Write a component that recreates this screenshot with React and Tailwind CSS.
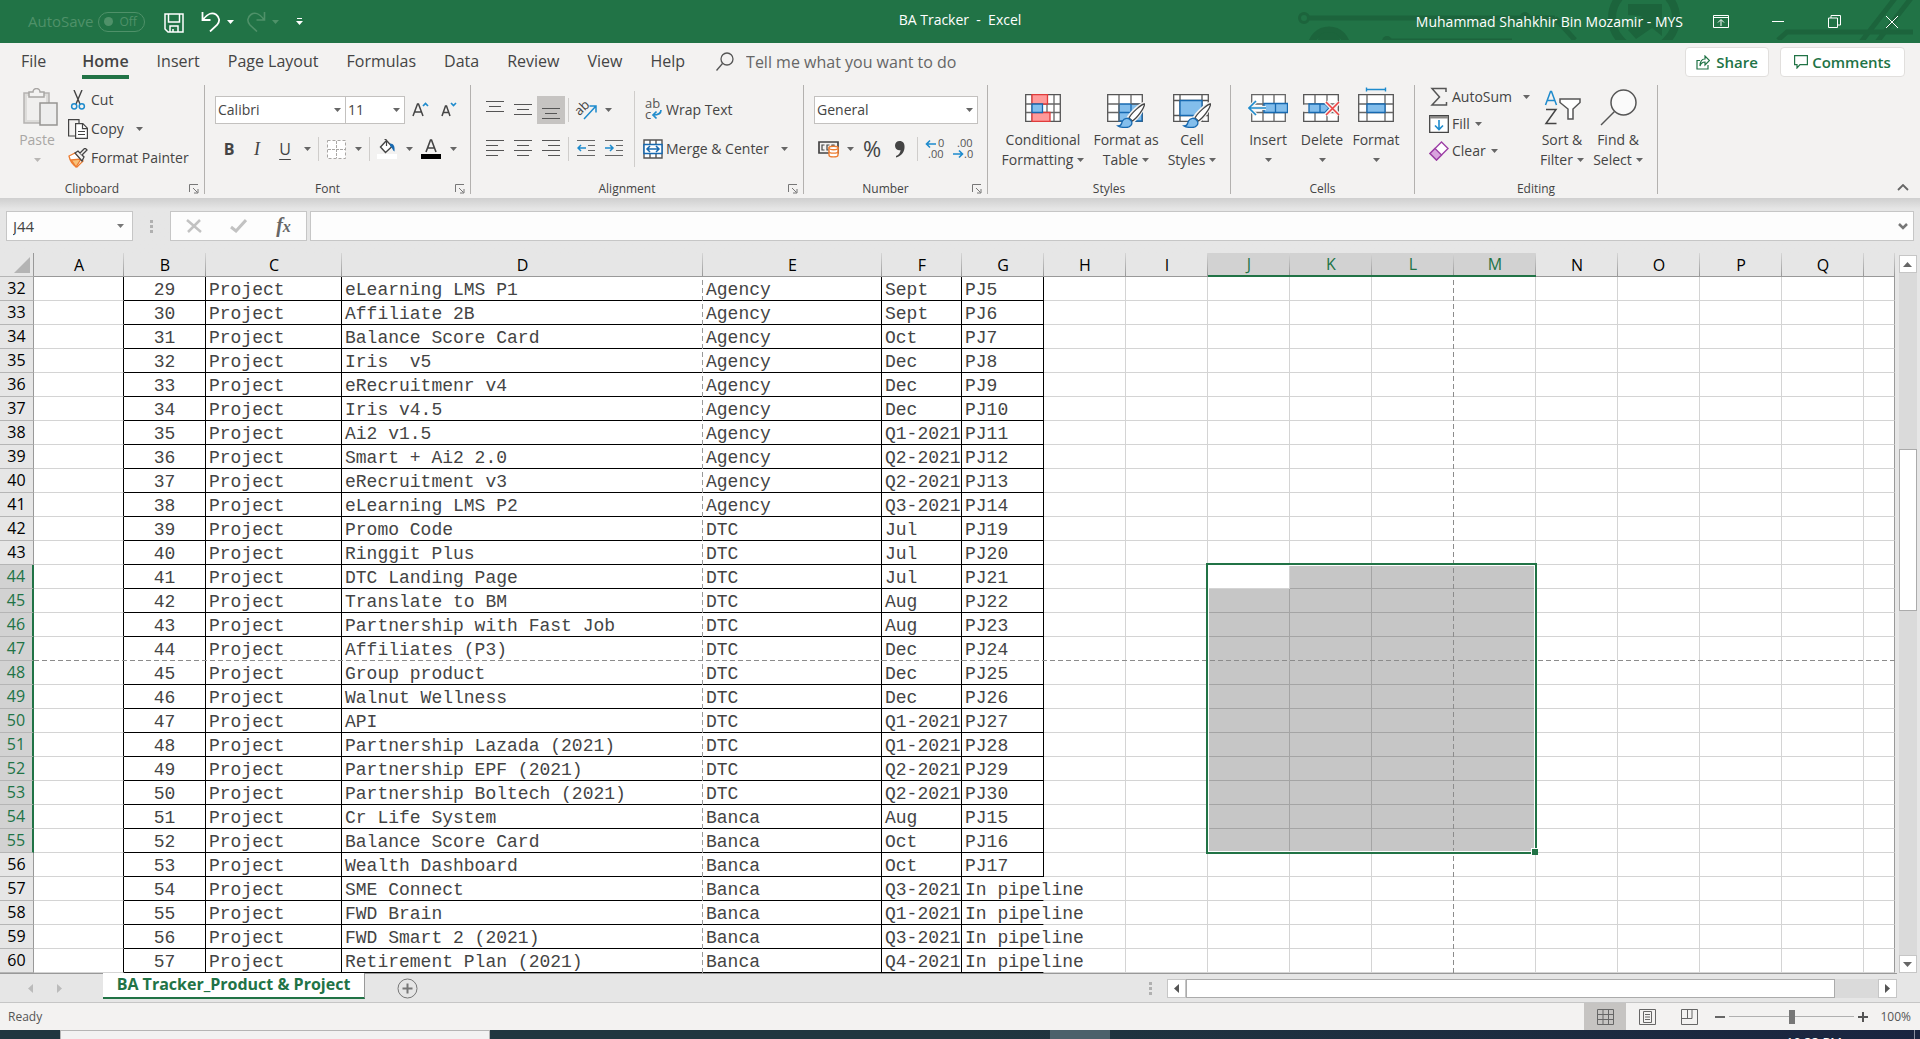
import React from 'react';
import clsx from 'clsx';

const TABS = ['File', 'Home', 'Insert', 'Page Layout', 'Formulas', 'Data', 'Review', 'View', 'Help'];

const COLUMNS = [
    { id: 'A', width: 'w-[90px]' },
    { id: 'B', width: 'w-[82px]' },
    { id: 'C', width: 'w-[136px]' },
    { id: 'D', width: 'w-[361px]' },
    { id: 'E', width: 'w-[179px]' },
    { id: 'F', width: 'w-[80px]' },
    { id: 'G', width: 'w-[82px]' },
    { id: 'H', width: 'w-[82px]' },
    { id: 'I', width: 'w-[82px]' },
    { id: 'J', width: 'w-[82px]' },
    { id: 'K', width: 'w-[82px]' },
    { id: 'L', width: 'w-[82px]' },
    { id: 'M', width: 'w-[82px]' },
    { id: 'N', width: 'w-[82px]' },
    { id: 'O', width: 'w-[82px]' },
    { id: 'P', width: 'w-[82px]' },
    { id: 'Q', width: 'w-[82px]' },
    { id: '', width: '' },
];

const FIRST_ROW = 32;
const DATA_COLUMNS = ['B', 'C', 'D', 'E', 'F', 'G'];
const SELECTED_COLUMNS = ['J', 'K', 'L', 'M'];

// name, channel, due, code
const PROJECTS = [
    ['eLearning LMS P1', 'Agency', 'Sept', 'PJ5'],
    ['Affiliate 2B', 'Agency', 'Sept', 'PJ6'],
    ['Balance Score Card', 'Agency', 'Oct', 'PJ7'],
    ['Iris  v5', 'Agency', 'Dec', 'PJ8'],
    ['eRecruitmenr v4', 'Agency', 'Dec', 'PJ9'],
    ['Iris v4.5', 'Agency', 'Dec', 'PJ10'],
    ['Ai2 v1.5', 'Agency', 'Q1-2021', 'PJ11'],
    ['Smart + Ai2 2.0', 'Agency', 'Q2-2021', 'PJ12'],
    ['eRecruitment v3', 'Agency', 'Q2-2021', 'PJ13'],
    ['eLearning LMS P2', 'Agency', 'Q3-2021', 'PJ14'],
    ['Promo Code', 'DTC', 'Jul', 'PJ19'],
    ['Ringgit Plus', 'DTC', 'Jul', 'PJ20'],
    ['DTC Landing Page', 'DTC', 'Jul', 'PJ21'],
    ['Translate to BM', 'DTC', 'Aug', 'PJ22'],
    ['Partnership with Fast Job', 'DTC', 'Aug', 'PJ23'],
    ['Affiliates (P3)', 'DTC', 'Dec', 'PJ24'],
    ['Group product', 'DTC', 'Dec', 'PJ25'],
    ['Walnut Wellness', 'DTC', 'Dec', 'PJ26'],
    ['API', 'DTC', 'Q1-2021', 'PJ27'],
    ['Partnership Lazada (2021)', 'DTC', 'Q1-2021', 'PJ28'],
    ['Partnership EPF (2021)', 'DTC', 'Q2-2021', 'PJ29'],
    ['Partnership Boltech (2021)', 'DTC', 'Q2-2021', 'PJ30'],
    ['Cr Life System', 'Banca', 'Aug', 'PJ15'],
    ['Balance Score Card', 'Banca', 'Oct', 'PJ16'],
    ['Wealth Dashboard', 'Banca', 'Oct', 'PJ17'],
    ['SME Connect', 'Banca', 'Q3-2021', 'In pipeline'],
    ['FWD Brain', 'Banca', 'Q1-2021', 'In pipeline'],
    ['FWD Smart 2 (2021)', 'Banca', 'Q3-2021', 'In pipeline'],
    ['Retirement Plan (2021)', 'Banca', 'Q4-2021', 'In pipeline'],
];

const ROWS = PROJECTS.map(([name, channel, due, code], i) => ({
    row: FIRST_ROW + i,
    cells: { B: FIRST_ROW + i - 3, C: 'Project', D: name, E: channel, F: due, G: code },
}));

/* ---------- small pieces ---------- */

const Caret = ({ className = 'text-[#666]' }) => (
    <svg width="7" height="4" viewBox="0 0 7 4" className={clsx('shrink-0', className)} aria-hidden="true">
        <path d="M0 0h7L3.5 4z" fill="currentColor" />
    </svg>
);

const CaretButton = ({ label }) => (
    <button aria-label={label} className="flex h-7 w-4 items-center justify-center">
        <Caret />
    </button>
);

const IconButton = ({ label, active, children }) => (
    <button aria-label={label} className={clsx('flex h-7 w-7 items-center justify-center', active && 'bg-[#c6c4c2]')}>
        {children}
    </button>
);

const Divider = () => <div className="mx-[3px] h-6 w-px bg-[#cfcdcb]" />;

const Launcher = ({ label }) => (
    <button aria-label={label} className="absolute right-[5px] top-[6px]">
        <svg width="10" height="10" viewBox="0 0 10 10" fill="none" stroke="#777">
            <path d="M.5 8V.5H9M4 4l4.5 4.5M9 5v4H5" />
        </svg>
    </button>
);

const Group = ({ label, width, launcher, children }) => (
    <>
        <section aria-label={label} className={clsx('shrink-0', width)}>
            <div className="h-[93px]">{children}</div>
            <div className={clsx('relative h-5 text-center text-xs leading-[22px] text-[#444]', launcher && 'pr-5')}>
                {label}
                {launcher && <Launcher label={`${label} settings`} />}
            </div>
        </section>
        <div className="h-[109px] w-px shrink-0 bg-[#b3b1af]" />
    </>
);

const Combo = ({ label, value, width }) => (
    <div className={clsx('relative h-7', width)}>
        <select aria-label={label} className="h-full w-full appearance-none border border-[#c3c1bf] bg-white pl-[2px] text-sm text-[#444]">
            <option>{value}</option>
        </select>
        <Caret className="pointer-events-none absolute right-[5px] top-3 text-[#666]" />
    </div>
);

const BigButton = ({ width, icon, lines, disabled, caretBelow }) => (
    <button
        disabled={disabled}
        className={clsx('flex flex-col items-center text-sm leading-5', width, disabled ? 'text-[#a9a7a5]' : 'text-[#444]')}
    >
        <span className="flex h-[45px] items-end justify-center pb-1">{icon}</span>
        <span className="whitespace-nowrap">{lines[0]}</span>
        <span className="flex h-5 items-center gap-1 whitespace-nowrap">
            {!caretBelow && lines[1]}
            <Caret className={disabled ? 'text-[#b9b7b5]' : 'text-[#666]'} />
        </span>
    </button>
);

/* ---------- icons ---------- */

const Lines = ({ rows }) => (
    <svg width="18" height="18" viewBox="0 0 18 18" stroke="#555" aria-hidden="true">
        {rows.map(([x1, x2, y]) => (
            <path key={y} d={`M${x1} ${y}.5H${x2}`} />
        ))}
    </svg>
);

const IndentIcon = ({ d }) => (
    <svg width="18" height="18" viewBox="0 0 18 18" fill="none" aria-hidden="true">
        <path d="M0 .5h18M11 5.5h7M11 10.5h7M0 15.5h18" stroke="#666" />
        <path d={d} stroke="#1e8bcd" strokeWidth="1.5" />
    </svg>
);

const PasteIcon = () => (
    <svg width="41" height="38" viewBox="-6 0 41 38" fill="none" stroke="#a8a6a4" strokeWidth="1.5">
        <path d="M1 5h25v30H1z" fill="#dddcda" stroke="#b5b3b1" />
        <path d="M4 8h19v24H4z" fill="#f0efee" stroke="none" />
        <path d="M6 4h4a3.5 3.5 0 0 1 7 0h4v5H6z" fill="#f3f2f1" />
        <path d="M17 15h17v22H17z" fill="#ededed" stroke="#979593" />
    </svg>
);

const CutIcon = () => (
    <svg width="20" height="20" viewBox="0 0 20 20" fill="none">
        <path d="M6 0l6 14M14 0L8 14" stroke="#444" strokeWidth="1.4" />
        <circle cx="6.2" cy="16.3" r="2.6" stroke="#1e8bcd" strokeWidth="1.5" />
        <circle cx="13.8" cy="16.3" r="2.6" stroke="#1e8bcd" strokeWidth="1.5" />
    </svg>
);

const CopyIcon = () => (
    <svg width="20" height="20" viewBox="0 0 20 20" fill="none" stroke="#444" strokeWidth="1.2">
        <path d="M7 17H.6V.6H11V4" />
        <path d="M7.6 4.6h7.2l4.6 4.6v10.2H7.6z" fill="#fff" />
        <path d="M14.5 4.6v5h5M10 12.5h7M10 15.5h7" />
    </svg>
);

const PainterIcon = () => (
    <svg width="20" height="20" viewBox="0 0 20 20" fill="none" strokeWidth="1.3">
        <path d="M1 8l6-3 8 8-6 6C5 17 2 13 1 8z" fill="#fff" stroke="#ed7d31" />
        <path d="M3 12l10-1-5 8z" fill="#f8c27a" stroke="#ed7d31" />
        <path d="M7 5l3-2 6 6-2 4z" fill="#f3f2f1" stroke="#444" />
        <path d="M12 5l5-5 2 2-5 5" fill="#f3f2f1" stroke="#444" />
    </svg>
);

const BordersIcon = () => (
    <svg width="19" height="19" viewBox="0 0 19 19" fill="none" stroke="#a8a6a4">
        <path d="M.5.5h18v18H.5z" strokeDasharray="3 2" fill="#fff" />
        <path d="M9.5 1v17M1 9.5h17" strokeDasharray="3 1" />
    </svg>
);

const FillColorIcon = () => (
    <svg width="20" height="20" viewBox="0 0 20 20" fill="none">
        <path d="M3.5 8l6-6.5 5.5 6-6.5 6z" fill="#fff" stroke="#444" strokeWidth="1.4" />
        <path d="M9.5 7V2q0-2-2-1.5" stroke="#444" strokeWidth="1.2" />
        <path d="M13 4.5c4 0 5 3 4.5 8-2-1-2-4-4.5-5.5z" fill="#1769b0" />
        <path d="M0 15h20v5H0z" fill="#fff" />
    </svg>
);

const FontColorIcon = () => (
    <svg width="20" height="20" viewBox="0 0 20 20" fill="none">
        <path d="M5 13L9.5 1h1L15 13M6.5 9h7" stroke="#444" strokeWidth="1.6" />
        <path d="M0 15h20v5H0z" fill="#000" />
    </svg>
);

const FontSizeIcon = ({ up }) => (
    <svg width="18" height="16" viewBox="0 0 18 16" fill="none">
        <path d={up ? 'M1 14L5.5 2h1L11 14M2.5 10h7' : 'M2 14L5.5 4h1L10 14M3 10.5h6'} stroke="#444" strokeWidth="1.5" />
        <path d={up ? 'M11 4l2.5-2.5L16 4' : 'M11 1l2.5 2.5L16 1'} stroke="#1e8bcd" strokeWidth="1.7" />
    </svg>
);

const OrientationIcon = () => (
    <svg width="21" height="20" viewBox="0 0 21 20" fill="none" className="overflow-visible">
        <text x="1" y="14" transform="rotate(-45 5 12)" fontSize="13" fill="#444" className="font-['Open_Sans']">ab</text>
        <path d="M8 19L19.5 6.5M13.5 6h6.5v6.5" stroke="#1e8bcd" strokeWidth="1.5" />
    </svg>
);

const WrapIcon = () => (
    <svg width="20" height="20" viewBox="0 0 20 20" fill="none" className="overflow-visible">
        <text x="2" y="8" fontSize="13" fill="#555" className="font-['Open_Sans']">ab</text>
        <text x="2" y="19" fontSize="13" fill="#555" className="font-['Open_Sans']">c</text>
        <path d="M18 10c0 4-3 5-8 5M13.5 11.5L10 15l3.5 3.5" stroke="#1e8bcd" strokeWidth="1.7" />
    </svg>
);

const MergeIcon = () => (
    <svg width="20" height="20" viewBox="0 0 20 20" fill="none">
        <path d="M1 1h18v18H1zM7 1v5M13 1v5M7 14v5M13 14v5" stroke="#555" strokeWidth="1.4" fill="#fff" />
        <path d="M1 5.5h18v9H1z" fill="#fff" stroke="#1769b0" strokeWidth="1.5" />
        <path d="M4 10h12M7 7l-3 3 3 3M13 7l3 3-3 3" stroke="#1769b0" strokeWidth="1.5" />
    </svg>
);

const CurrencyIcon = () => (
    <svg width="21" height="18" viewBox="0 0 21 18" fill="none">
        <path d="M1 2h19v11H1z" stroke="#444" strokeWidth="1.7" />
        <path d="M6.5 5H4v5h2.5M11.5 5H9v5h2.5M16 8V5h-2v3" stroke="#444" strokeWidth="1.2" />
        <path d="M11 8v7c0 2.5 9 2.5 9 0V8z" fill="#fff" stroke="#ed7d31" strokeWidth="1.4" />
        <ellipse cx="15.5" cy="8" rx="4.5" ry="1.7" fill="#fff" stroke="#ed7d31" strokeWidth="1.4" />
        <path d="M11 11.5c0 2.2 9 2.2 9 0" stroke="#ed7d31" strokeWidth="1.4" />
    </svg>
);

const DecimalIcon = ({ more }) => (
    <svg width="20" height="20" viewBox="0 0 20 20" fill="none" className="overflow-visible">
        <text x={more ? 13 : 4} y="8" fontSize="11" fill="#555" className="font-['Open_Sans']">{more ? '0' : '.00'}</text>
        <text x={more ? 3 : 11} y="19" fontSize="11" fill="#555" className="font-['Open_Sans']">{more ? '.00' : '.0'}</text>
        <path d={more ? 'M11 5H1.5M5 1.5L1.5 5 5 8.5' : 'M0 15h9.5M6 11.5L9.5 15 6 18.5'} stroke="#1e8bcd" strokeWidth="1.6" />
    </svg>
);

const TableGrid = ({ children, width = 36, top = 0 }) => (
    <svg width={width} height={29 + top} viewBox={`0 ${-top} ${width} ${29 + top}`} fill="none" strokeWidth="1.3" className="mb-[3px]">
        <path d="M.7.7h34.6v26.6H.7z" fill="#fff" stroke="#555" />
        {children}
    </svg>
);

const ConditionalIcon = () => (
    <TableGrid>
        <path d="M7 1v26M22 1v26M29 1v26M1 10h34M1 18.5h34" stroke="#666" />
        <path d="M7 .7h15.5V10H7zM7 18.5h18v8.8H7z" fill="#ff9a9a" stroke="#e03c3c" />
        <path d="M7 10h10.5v8.5H7z" fill="#83beec" stroke="#1769b0" />
    </TableGrid>
);

const Brush = () => (
    <>
        <path d="M37 10c-3 0-13 9-15.5 14l4 3.5C30 24 37 14 37 10z" fill="#fff" stroke="#f3f2f1" strokeWidth="4" />
        <path d="M37.5 10c-3 0-13 9-15.5 14l3.5 3C30 24 37.5 14 37.5 10z" fill="#fff" stroke="#444" />
        <path d="M11 32c4 0 3-2 4.5-5s6-4 8.5-.5-1 7-5 7c-3 0-6 0-8-1.5z" fill="#83beec" stroke="#1769b0" />
    </>
);

const FormatTableIcon = () => (
    <svg width="38" height="34" viewBox="0 0 38 34" fill="none" strokeWidth="1.3" className="-mb-[2px]">
        <path d="M.7.7h34.6v26.6H.7z" fill="#fff" stroke="#555" />
        <path d="M12 10h23v17H12z" fill="#83beec" stroke="#1769b0" />
        <path d="M12 1v26M24 1v9M1 10h11M24 10h11M1 18.5h11" stroke="#666" />
        <path d="M24 10v17M12 18.5h23" stroke="#1769b0" />
        <Brush />
    </svg>
);

const CellStylesIcon = () => (
    <svg width="38" height="34" viewBox="0 0 38 34" fill="none" strokeWidth="1.3" className="-mb-[2px]">
        <path d="M.7.7h34.6v26.6H.7zM7 1v26M29 1v26M1 6.5h34M1 21.5h34" fill="#fff" stroke="#555" />
        <path d="M7 6.5h22v15H7z" fill="#83beec" stroke="#1769b0" />
        <Brush />
    </svg>
);

const InsertIcon = () => (
    <svg width="40" height="29" viewBox="-3 0 40 29" fill="none" strokeWidth="1.3" className="mb-[3px]">
        <path d="M.7.7h33.6v26.6H.7zM12 1v26M23 1v26M1 10h33M1 18.5h33" fill="#fff" stroke="#666" />
        <path d="M13 9.5h23.5v9H13z" fill="#83beec" stroke="#1769b0" />
        <path d="M24.5 9.5v9" stroke="#1769b0" />
        <path d="M15 14H-1M5 7l-7 7 7 7" stroke="#f3f2f1" strokeWidth="4" />
        <path d="M15 14H-1M5 7l-7 7 7 7" stroke="#1e8bcd" strokeWidth="1.6" />
    </svg>
);

const DeleteIcon = () => (
    <TableGrid width={38}>
        <path d="M12 1v9M24 1v9M12 18v9M24 18v9M1 10h34M1 18.5h34" stroke="#666" />
        <path d="M0 10.7h6v7H0z" fill="#f3f2f1" />
        <path d="M6 10h16l4 4-4 4.5H6zM17 10v8" fill="#83beec" stroke="#1769b0" />
        <path d="M23 8l13 13M36 8L23 21" stroke="#f3f2f1" strokeWidth="4.5" />
        <path d="M23 8l13 13M36 8L23 21" stroke="#ee4444" strokeWidth="1.6" />
    </TableGrid>
);

const FormatIcon = () => (
    <TableGrid top={7}>
        <path d="M9 1v26M27 1v26M1 10h34M1 18.5h34" stroke="#666" />
        <path d="M9 10h18v8.5H9z" fill="#83beec" stroke="#1769b0" />
        <path d="M8.5-6.5v4M27.5-6.5v4M8.5-4.5h19" stroke="#1e8bcd" strokeWidth="1.4" />
    </TableGrid>
);

const SumIcon = () => (
    <svg width="20" height="20" viewBox="0 0 20 20" fill="none" stroke="#555" strokeWidth="1.5">
        <path d="M17 5V1.5H3L10.5 10 3 18h14.5v-3" />
    </svg>
);

const FillIcon = () => (
    <svg width="20" height="18" viewBox="0 0 20 18" fill="none">
        <path d="M.7.7h18.6v16.6H.7z" fill="#fff" stroke="#444" strokeWidth="1.3" />
        <path d="M1 1h18v2.5H1z" fill="#8a8886" />
        <path d="M10 5v9M6 10.5l4 4 4-4" stroke="#1e8bcd" strokeWidth="1.6" />
    </svg>
);

const ClearIcon = () => (
    <svg width="20" height="20" viewBox="0 0 20 20" fill="none" stroke="#9c3fa5" strokeWidth="1.4">
        <path d="M12.5 1L19 7.5 7.5 19 1 12.5z" fill="#fff" />
        <path d="M6 7.500L12.5 14l-5 5L1 12.5z" fill="#d9a3de" />
    </svg>
);

const SortIcon = () => (
    <svg width="37" height="36" viewBox="0 0 37 36" fill="none" strokeWidth="1.5">
        <path d="M1.5 15L6.5 1.5h1L12.5 15M3 10.5h8" stroke="#1e8bcd" />
        <path d="M2 19.5h10L2 33.500h10.5" stroke="#444" />
        <path d="M16 9h20v3.5L29 19v10h-5V19l-8-6.5z" stroke="#555" fill="#fff" />
    </svg>
);

const FindIcon = () => (
    <svg width="37" height="37" viewBox="0 0 37 37" fill="none" stroke="#555" strokeWidth="1.5">
        <circle cx="23.5" cy="13.5" r="12.5" fill="#fafafa" />
        <path d="M14.5 22.5L1 36" />
    </svg>
);

/* ---------- title bar ---------- */

const TitleBar = () => (
    <header className="relative grid h-[43px] shrink-0 grid-cols-[1fr_auto_1fr] items-center bg-[#217346] text-white">
        <svg width="630" height="40" viewBox="0 0 630 40" className="absolute right-0 top-0" fill="none" stroke="#1c643c" aria-hidden="true">
            <circle cx="14" cy="18" r="4.5" strokeWidth="3" />
            <path d="M19 18h246M265 18l20 22" strokeWidth="5" />
            <circle cx="39" cy="48" r="18" strokeWidth="7" />
            <path d="M28 40a11 8 0 0 1 22 0z" fill="#1c643c" stroke="none" />
            <circle cx="97" cy="41" r="5" fill="#1c643c" stroke="none" />
            <circle cx="235" cy="17" r="5" fill="#1c643c" stroke="none" />
            <path d="M97 39.5h125" strokeWidth="2" />
            <circle cx="354" cy="18" r="32" strokeWidth="8" />
            <path d="M338 4h34v32l-10-8-16 11-8-9 14-14-14-1z" fill="#1c643c" stroke="none" />
            <path d="M488 40l9-8h126M571 42L606-3M587 42L622-3" strokeWidth="5" />
        </svg>
        <div className="relative flex items-center pl-7">
            <span className="text-[15px] text-[#4f9169]">AutoSave</span>
            <button aria-label="AutoSave off" className="ml-1 flex h-5 w-[47px] items-center gap-[7px] rounded-full border border-[#4f9169] pl-[5px] text-xs text-[#4f9169]">
                <span className="h-[9px] w-[9px] rounded-full bg-[#4f9169]" />
                Off
            </button>
            <button aria-label="Save" className="ml-[19px] mt-[2px]">
                <svg width="20" height="20" viewBox="0 0 20 20" fill="none" stroke="#fff" strokeWidth="1.5">
                    <path d="M1 1h18v18H4l-3-3zM4.5 1v8h11V1M6 19v-6h8v6M9 16v3" />
                </svg>
            </button>
            <button aria-label="Undo" className="ml-[17px] flex items-center gap-[6px]">
                <svg width="20" height="21" viewBox="0 0 20 21" fill="none" stroke="#fff" strokeWidth="1.8">
                    <path d="M1.5 1v8h8M2 8.5C6 3 11 1 15 3.500c4 3 4 7 1 10.500l-7 6.500" />
                </svg>
                <Caret className="text-white" />
            </button>
            <button aria-label="Redo" disabled className="ml-3 flex items-center gap-[6px]">
                <svg width="20" height="21" viewBox="0 0 20 21" fill="none" stroke="#4f9169" strokeWidth="1.6">
                    <path d="M18.5 1v8h-8M18 8.5C14 3 9 1 5 3.500c-4 3-4 7-1 10.500l7 6.500" />
                </svg>
                <Caret className="text-[#4f9169]" />
            </button>
            <button aria-label="Customize toolbar" className="ml-[17px]">
                <svg width="7" height="8" viewBox="0 0 7 8">
                    <path d="M1 0h5v1H1zM0 3h7L3.5 7z" fill="#fff" />
                </svg>
            </button>
        </div>
        <h1 className="relative whitespace-pre pb-[3px] text-sm">BA Tracker  -  Excel</h1>
        <div className="relative flex items-center justify-end">
            <span className="mr-[9px] text-sm">Muhammad Shahkhir Bin Mozamir - MYS</span>
            <button aria-label="Ribbon display options" className="flex h-10 w-[57px] items-center justify-center">
                <svg width="16" height="13" viewBox="0 0 16 13" fill="none" stroke="#fff">
                    <path d="M.5.5h15v12H.5zM.5 2.5h15M8 11V5M5 7.5l3-3 3 3" />
                </svg>
            </button>
            <button aria-label="Minimize" className="flex h-10 w-[57px] items-center justify-center">
                <span className="h-px w-3 bg-white" />
            </button>
            <button aria-label="Restore" className="flex h-10 w-[57px] items-center justify-center">
                <svg width="13" height="13" viewBox="0 0 13 13" fill="none" stroke="#fff">
                    <path d="M.5 3h9v9.5h-9zM3 3V.5h9.5V10H10" />
                </svg>
            </button>
            <button aria-label="Close" className="flex h-10 w-[57px] items-center justify-center">
                <svg width="12" height="12" viewBox="0 0 12 12" stroke="#fff">
                    <path d="M0 0l12 12M12 0L0 12" />
                </svg>
            </button>
        </div>
    </header>
);

/* ---------- ribbon ---------- */

const TabRow = () => (
    <nav className="flex h-[42px] items-start pl-[21px] pr-[15px] text-base text-[#444]">
        <div className="flex gap-7">
            {TABS.map((tab) => (
                <button
                    key={tab}
                    className={clsx('h-9 border-b-4 pt-1 leading-7', tab === 'Home' ? 'ml-2 border-[#217346] font-semibold' : 'border-transparent')}
                >
                    {tab}
                </button>
            ))}
        </div>
        <label className="ml-[31px] flex h-9 items-center gap-3 pt-1 pb-[3px] text-[#666]">
            <svg width="18" height="19" viewBox="0 0 18 19" fill="none" stroke="#555" strokeWidth="1.3">
                <circle cx="11" cy="7" r="6" />
                <path d="M6.5 11.5L.5 18.5" />
            </svg>
            <input aria-label="Search commands" placeholder="Tell me what you want to do" className="w-60 bg-transparent outline-none placeholder:text-[#666]" />
        </label>
        <div className="ml-auto flex gap-[11px] pt-1 text-[15px] font-semibold text-[#217346]">
            <button className="flex h-[30px] w-[84px] items-center justify-center gap-[6px] rounded-sm border border-[#e1dfdd] bg-white">
                <svg width="14" height="15" viewBox="0 0 14 15" fill="none" stroke="#217346" strokeWidth="1.2">
                    <path d="M4 5.5H1V14h11v-4M4 11c0-5 2-7 5-7V1l4.5 4.5L9 10V7C6.5 7 5 8 4 11z" />
                </svg>
                Share
            </button>
            <button className="flex h-[30px] w-[125px] items-center justify-center gap-1 rounded-sm border border-[#e1dfdd] bg-white">
                <svg width="14" height="14" viewBox="0 0 14 14" fill="none" stroke="#217346" strokeWidth="1.2">
                    <path d="M.6.6h12.8v9H6l-3 3.400V9.600H.6z" />
                </svg>
                Comments
            </button>
        </div>
    </nav>
);

const Ribbon = () => (
    <div className="relative flex h-[113px] text-sm text-[#444]">
        <Group label="Clipboard" width="w-[204px]" launcher>
            <div className="flex pl-[9px]">
                <BigButton width="w-14" icon={<PasteIcon />} lines={['Paste']} disabled caretBelow />
                <div className="flex flex-col pl-[3px]">
                    <button className="flex h-[29px] items-center gap-[3px]"><CutIcon />Cut</button>
                    <button className="flex h-[29px] items-center gap-[3px]">
                        <CopyIcon />Copy<span className="pl-[9px]"><Caret /></span>
                    </button>
                    <button className="flex h-[29px] items-center gap-[3px] whitespace-nowrap"><PainterIcon />Format Painter</button>
                </div>
            </div>
        </Group>

        <Group label="Font" width="w-[265px]" launcher>
            <div className="pl-[10px] pt-[11px]">
                <div className="flex">
                    <Combo label="Font name" value="Calibri" width="w-[131px]" />
                    <Combo label="Font size" value="11" width="-ml-px w-[60px]" />
                    <div className="flex pl-[2px]">
                        <IconButton label="Increase font size"><FontSizeIcon up /></IconButton>
                        <IconButton label="Decrease font size"><FontSizeIcon /></IconButton>
                    </div>
                </div>
                <div className="flex items-center pt-[11px]">
                    <IconButton label="Bold"><span className="text-base font-bold">B</span></IconButton>
                    <IconButton label="Italic"><span className="font-['Liberation_Serif'] text-lg italic">I</span></IconButton>
                    <IconButton label="Underline"><span className="text-base underline underline-offset-4">U</span></IconButton>
                    <CaretButton label="Underline style" />
                    <Divider />
                    <IconButton label="Borders"><BordersIcon /></IconButton>
                    <CaretButton label="Border style" />
                    <Divider />
                    <IconButton label="Fill color"><FillColorIcon /></IconButton>
                    <CaretButton label="Fill color list" />
                    <IconButton label="Font color"><FontColorIcon /></IconButton>
                    <CaretButton label="Font color list" />
                </div>
            </div>
        </Group>

        <Group label="Alignment" width="w-[332px]" launcher>
            <div className="flex pl-[10px]">
                <div className="w-[153px] pt-[11px]">
                    <div className="flex items-center">
                        <IconButton label="Top align"><Lines rows={[[0, 18, 0], [3, 15, 5], [0, 18, 10]]} /></IconButton>
                        <IconButton label="Middle align"><Lines rows={[[0, 18, 3], [3, 15, 8], [0, 18, 13]]} /></IconButton>
                        <IconButton label="Bottom align" active><Lines rows={[[0, 18, 7], [3, 15, 12], [0, 18, 17]]} /></IconButton>
                        <Divider />
                        <IconButton label="Orientation"><OrientationIcon /></IconButton>
                        <CaretButton label="Orientation list" />
                    </div>
                    <div className="flex items-center pt-[11px]">
                        <IconButton label="Align left"><Lines rows={[[0, 18, 0], [0, 12, 5], [0, 18, 10], [0, 12, 15]]} /></IconButton>
                        <IconButton label="Center"><Lines rows={[[0, 18, 0], [3, 15, 5], [0, 18, 10], [3, 15, 15]]} /></IconButton>
                        <IconButton label="Align right"><Lines rows={[[0, 18, 0], [6, 18, 5], [0, 18, 10], [6, 18, 15]]} /></IconButton>
                        <Divider />
                        <IconButton label="Decrease indent"><IndentIcon d="M9 8H1M4 5L1 8l3 3" /></IconButton>
                        <IconButton label="Increase indent"><IndentIcon d="M0 8h8M5 5l3 3-3 3" /></IconButton>
                    </div>
                </div>
                <div className="mt-[6px] h-[76px] w-px bg-[#cfcdcb]" />
                <div className="flex flex-col gap-[11px] pl-2 pt-[11px]">
                    <button className="flex h-7 items-center gap-[3px]"><WrapIcon />Wrap Text</button>
                    <button className="flex h-7 items-center gap-[3px] whitespace-nowrap">
                        <MergeIcon />Merge &amp; Center<span className="pl-[9px]"><Caret /></span>
                    </button>
                </div>
            </div>
        </Group>

        <Group label="Number" width="w-[183px]" launcher>
            <div className="pl-[10px] pt-[11px]">
                <Combo label="Number format" value="General" width="w-[164px]" />
                <div className="flex items-center pt-[11px]">
                    <IconButton label="Accounting format"><CurrencyIcon /></IconButton>
                    <CaretButton label="Currency list" />
                    <IconButton label="Percent style"><span className="text-[22px]">%</span></IconButton>
                    <IconButton label="Comma style">
                        <svg width="10" height="17" viewBox="0 0 10 17">
                            <path d="M4.5 0C8 0 10 2.5 9.5 7c-.5 5-4 8.500-8.500 9.500V15c3-1 4.500-3.500 4.500-6C2 10 0 7.500 0 4.500 0 2 2 0 4.500 0z" fill="#444" />
                        </svg>
                    </IconButton>
                    <Divider />
                    <IconButton label="Increase decimal"><DecimalIcon more /></IconButton>
                    <IconButton label="Decrease decimal"><DecimalIcon /></IconButton>
                </div>
            </div>
        </Group>

        <Group label="Styles" width="w-[242px]">
            <div className="flex pl-3">
                <BigButton width="w-[86px]" icon={<ConditionalIcon />} lines={['Conditional', 'Formatting']} />
                <BigButton width="w-20" icon={<FormatTableIcon />} lines={['Format as', 'Table']} />
                <BigButton width="w-[52px]" icon={<CellStylesIcon />} lines={['Cell', 'Styles']} />
            </div>
        </Group>

        <Group label="Cells" width="w-[183px]">
            <div className="flex pl-[10px]">
                <BigButton width="w-[54px]" icon={<InsertIcon />} lines={['Insert']} caretBelow />
                <BigButton width="w-[54px]" icon={<DeleteIcon />} lines={['Delete']} caretBelow />
                <BigButton width="w-[54px]" icon={<FormatIcon />} lines={['Format']} caretBelow />
            </div>
        </Group>

        <Group label="Editing" width="w-[242px]">
            <div className="flex pl-[14px]">
                <div className="flex w-[105px] flex-col">
                    <button className="flex h-[27px] items-center gap-[3px] pb-[3px]"><SumIcon />AutoSum<span className="ml-auto mr-1"><Caret /></span></button>
                    <button className="flex h-[27px] items-center gap-[3px] pb-[3px]"><FillIcon />Fill<span className="pl-[2px]"><Caret /></span></button>
                    <button className="flex h-[27px] items-center gap-[3px] pb-[3px]"><ClearIcon />Clear<span className="pl-[2px]"><Caret /></span></button>
                </div>
                <BigButton width="w-14" icon={<SortIcon />} lines={['Sort &', 'Filter']} />
                <BigButton width="w-14" icon={<FindIcon />} lines={['Find &', 'Select']} />
            </div>
        </Group>

        <button aria-label="Collapse ribbon" className="ml-auto mr-[11px] self-end pb-[7px]">
            <svg width="12" height="7" viewBox="0 0 12 7" fill="none" stroke="#666" strokeWidth="1.8">
                <path d="M1 6l5-5 5 5" />
            </svg>
        </button>
    </div>
);

/* ---------- formula bar ---------- */

const Dots = () => (
    <div className="flex flex-col gap-[2px]" aria-hidden="true">
        <span className="h-[3px] w-[3px] bg-[#b0b0b0]" />
        <span className="h-[3px] w-[3px] bg-[#b0b0b0]" />
        <span className="h-[3px] w-[3px] bg-[#b0b0b0]" />
    </div>
);

const FormulaBar = () => (
    <div className="flex h-[55px] shrink-0 items-start bg-linear-to-b from-[#cfcfcf] from-0% to-[#e6e6e6] to-20% pl-[6px] pr-[6px] pt-[13px]">
        <div className="relative h-[30px] w-[127px]">
            <input aria-label="Name box" defaultValue="J44" className="h-full w-full border border-[#c6c6c6] bg-[#fdfdfd] pl-[6px] text-[15px] text-[#444]" />
            <Caret className="absolute right-[9px] top-[13px] text-[#777]" />
        </div>
        <div className="flex h-[30px] w-[37px] items-center justify-center"><Dots /></div>
        <div className="flex h-[30px] w-[137px] items-center border border-[#c6c6c6] bg-[#fdfdfd]">
            <button aria-label="Cancel" className="flex flex-1 justify-center">
                <svg width="16" height="14" viewBox="0 0 16 14" stroke="#c2c2c2" strokeWidth="2.5">
                    <path d="M1 1l14 12M14 1L2 13" />
                </svg>
            </button>
            <button aria-label="Enter" className="flex flex-1 justify-center">
                <svg width="17" height="14" viewBox="0 0 17 14" fill="none" stroke="#c2c2c2" strokeWidth="3">
                    <path d="M1 8l5 4L16 1" />
                </svg>
            </button>
            <button aria-label="Insert function" className="flex-1 font-['Liberation_Serif'] text-xl font-bold italic leading-6 text-[#666]">
                f<span className="text-base">x</span>
            </button>
        </div>
        <div className="relative ml-[3px] h-[30px] flex-1">
            <input aria-label="Formula" className="h-full w-full border border-[#c6c6c6] bg-[#fdfdfd] px-2" />
            <svg width="10" height="7" viewBox="0 0 10 7" fill="none" stroke="#777" strokeWidth="2.5" className="absolute right-[6px] top-3">
                <path d="M1 1l4 4 4-4" />
            </svg>
        </div>
    </div>
);

/* ---------- sheet ---------- */

const isSelectedRow = (row) => row >= 44 && row <= 55;

const cellClass = (col, row, cells) => {
    const selected = isSelectedRow(row) && SELECTED_COLUMNS.includes(col) && !(col === 'J' && row === 44);
    const isData = DATA_COLUMNS.includes(col);
    const overflow = col === 'G' && cells.G === 'In pipeline';
    return clsx(
        'relative h-6 border-b border-r p-0 pt-1 leading-[19px] whitespace-pre',
        selected && 'bg-[#c6c6c6]',
        isData ? 'border-b-black' : selected ? 'border-b-[#a4a4a4]' : 'border-b-[#d4d4d4]',
        row === 47 && 'border-b-transparent',
        col === 'D' || col === 'L'
            ? 'border-r-transparent'
            : (isData && !overflow) || col === 'A'
              ? 'border-r-black'
              : overflow
                ? 'border-r-transparent'
                : selected
                  ? 'border-r-[#a4a4a4]'
                  : col === ''
                    ? 'border-r-[#999]'
                    : 'border-r-[#d4d4d4]',
        col === 'B' ? 'text-center' : 'pl-[3px]',
    );
};

const Sheet = () => (
    <div className="relative flex-1 bg-white">
        <table className="w-full table-fixed border-separate border-spacing-0">
            <colgroup>
                <col className="w-[34px]" />
                {COLUMNS.map((c) => (
                    <col key={c.id} className={c.width} />
                ))}
            </colgroup>
            <thead>
                <tr className="bg-[#e6e6e6] text-base leading-[22px]">
                    <th className="h-6 border-b border-r border-b-[#b5b5b5] border-r-[#999] p-0">
                        <svg width="16" height="16" viewBox="0 0 16 16" className="ml-[14px]" aria-hidden="true">
                            <path d="M16 0v16H0z" fill="#b4b4b4" />
                        </svg>
                    </th>
                    {COLUMNS.map((c) => {
                        const selected = SELECTED_COLUMNS.includes(c.id);
                        return (
                            <th
                                key={c.id}
                                className={clsx(
                                    'h-6 bg-linear-to-t from-[#999] to-[#d6d6d6] bg-[length:1px_100%] bg-right bg-no-repeat p-0 font-normal',
                                    selected ? 'border-b-2 border-b-[#217346] bg-[#d2d2d2] text-[#217346]' : 'border-b border-b-[#999] text-black',
                                )}
                            >
                                {c.id}
                            </th>
                        );
                    })}
                </tr>
            </thead>
            <tbody className="font-['Liberation_Mono',monospace] text-lg text-[#444]">
                {ROWS.map(({ row, cells }) => (
                    <tr key={row}>
                        <th
                            className={clsx(
                                "h-6 border-b border-b-[#b5b5b5] p-0 font-['Open_Sans',sans-serif] text-base font-normal leading-[23px]",
                                isSelectedRow(row) ? 'border-r-2 border-r-[#217346] bg-[#d2d2d2] text-[#217346]' : 'border-r border-r-[#999] bg-[#e6e6e6] text-black',
                            )}
                        >
                            {row}
                        </th>
                        {COLUMNS.map(({ id }) => (
                            <td key={id} className={cellClass(id, row, cells)}>
                                {cells[id]}
                                {id === 'J' && row === 44 && (
                                    <span className="absolute -left-[2px] -top-[2px] z-10 h-[291px] w-[331px] border-2 border-[#217346]">
                                        <span className="block h-full w-full border border-white" />
                                        <span className="absolute -bottom-[3px] -right-[3px] h-[7px] w-[7px] border-l border-t border-white bg-[#217346]" />
                                    </span>
                                )}
                            </td>
                        ))}
                    </tr>
                ))}
            </tbody>
        </table>
        {/* page breaks */}
        <div className="absolute bottom-0 left-[702px] top-6 w-px bg-[repeating-linear-gradient(to_bottom,transparent_0_3px,#999_3px_8px)]" />
        <div className="absolute bottom-0 left-[1453px] top-6 w-px bg-[repeating-linear-gradient(to_bottom,transparent_0_3px,#8c8c8c_3px_8px)]" />
        <div className="absolute left-[34px] right-0 top-[407px] h-px bg-[repeating-linear-gradient(to_right,#8c8c8c_0_5px,transparent_5px_8px)]" />
    </div>
);

const VerticalScroll = () => (
    <div className="flex w-[25px] shrink-0 flex-col items-center bg-[#e6e6e6] pt-[2px]">
        <button aria-label="Scroll up" className="flex h-[18px] w-[18px] items-center justify-center border border-[#c6c6c6] bg-white">
            <svg width="9" height="5" viewBox="0 0 9 5"><path d="M0 5h9L4.5 0z" fill="#666" /></svg>
        </button>
        <div className="flex w-[18px] flex-1 flex-col bg-[#dadada] pt-44">
            <div className="h-[162px] border border-[#ababab] bg-white" />
        </div>
        <button aria-label="Scroll down" className="flex h-[18px] w-[18px] items-center justify-center border border-[#c6c6c6] bg-white">
            <svg width="9" height="5" viewBox="0 0 9 5"><path d="M0 0h9L4.5 5z" fill="#666" /></svg>
        </button>
    </div>
);

const SheetTabs = () => (
    <div className="flex h-[30px] shrink-0 items-start border-b border-[#c6c6c6] bg-[#e6e6e6] pr-[23px]">
        <div className="flex h-[29px] w-[103px] items-center gap-6 border-t border-[#999] pl-7">
            <button aria-label="Previous sheet"><svg width="5" height="9" viewBox="0 0 5 9"><path d="M5 0v9L0 4.5z" fill="#bbb" /></svg></button>
            <button aria-label="Next sheet"><svg width="5" height="9" viewBox="0 0 5 9"><path d="M0 0v9l5-4.500z" fill="#bbb" /></svg></button>
        </div>
        <button className="h-[26px] w-[262px] whitespace-nowrap border-b-2 border-r border-b-[#217346] border-r-[#999] bg-white pb-[2px] text-base font-bold leading-[22px] text-[#217346]">
            BA Tracker_Product &amp; Project
        </button>
        <div className="flex h-[29px] flex-1 items-center border-t border-[#999] pl-8">
            <button aria-label="New sheet">
                <svg width="21" height="21" viewBox="0 0 21 21" fill="none" stroke="#777">
                    <circle cx="10.5" cy="10.5" r="9.5" />
                    <path d="M10.5 5.5v10M5.5 10.500h10" strokeWidth="2" />
                </svg>
            </button>
        </div>
        <div className="flex h-[29px] w-[748px] items-center border-t border-[#999]">
            <div className="w-[18px]"><Dots /></div>
            <button aria-label="Scroll left" className="flex h-[19px] w-[19px] items-center justify-center border border-[#c6c6c6] bg-white">
                <svg width="5" height="9" viewBox="0 0 5 9"><path d="M5 0v9L0 4.5z" fill="#555" /></svg>
            </button>
            <div className="flex h-[19px] flex-1 bg-[#dadada] pr-[43px]">
                <div className="flex-1 border border-[#ababab] bg-white" />
            </div>
            <button aria-label="Scroll right" className="flex h-[19px] w-[19px] items-center justify-center border border-[#c6c6c6] bg-white">
                <svg width="5" height="9" viewBox="0 0 5 9"><path d="M0 0v9l5-4.500z" fill="#555" /></svg>
            </button>
        </div>
    </div>
);

const StatusBar = () => (
    <footer className="flex h-[27px] shrink-0 items-center bg-[#f3f2f1] pl-2 pr-[9px] text-xs text-[#555]">
        <span>Ready</span>
        <div className="ml-auto flex items-center">
            <button aria-label="Normal view" className="flex h-[27px] w-[42px] items-center justify-center bg-[#c6c4c2]">
                <svg width="17" height="16" viewBox="0 0 17 16" fill="none" stroke="#666">
                    <path d="M.5.5h16v15H.5zM6 .5v15M11.5.5v15M.5 5.5h16M.5 10.5h16" />
                </svg>
            </button>
            <button aria-label="Page layout view" className="flex h-[27px] w-[42px] items-center justify-center">
                <svg width="17" height="16" viewBox="0 0 17 16" fill="none" stroke="#666">
                    <path d="M.5.5h16v15H.5zM4.5 2.5h8v11h-8zM6 5.5h5M6 8h5M6 10.5h5" />
                </svg>
            </button>
            <button aria-label="Page break preview" className="flex h-[27px] w-[42px] items-center justify-center">
                <svg width="17" height="16" viewBox="0 0 17 16" fill="none" stroke="#666">
                    <path d="M.5.5h16v15H.5zM6.5.5v9M.5 9.5h10.500V.5" />
                </svg>
            </button>
            <button aria-label="Zoom out" className="ml-[5px] h-[2px] w-[10px] bg-[#666]" />
            <input
                type="range"
                aria-label="Zoom"
                defaultValue="50"
                className="mx-1 h-4 w-[125px] appearance-none bg-linear-to-b from-[#b0b0b0] to-[#b0b0b0] bg-[length:100%_1px] bg-center bg-no-repeat [&::-webkit-slider-thumb]:h-[14px] [&::-webkit-slider-thumb]:w-[6px] [&::-webkit-slider-thumb]:appearance-none [&::-webkit-slider-thumb]:bg-[#777]"
            />
            <button aria-label="Zoom in">
                <svg width="10" height="10" viewBox="0 0 10 10" stroke="#555" strokeWidth="2"><path d="M5 0v10M0 5h10" /></svg>
            </button>
            <span className="ml-3">100%</span>
        </div>
    </footer>
);

const Taskbar = () => (
    <div className="flex h-10 shrink-0 bg-linear-to-r from-[#20363f] from-50% to-[#1a2440] text-[13px] text-white">
        <div className="ml-[60px] w-[430px] border border-[#b5b5b5] bg-[#f2f2f2]" />
        <div className="ml-[560px] w-[60px] bg-[#4c616b]" />
        <div className="ml-auto mr-[72px] pt-1 leading-4">10:33 PM</div>
        <div className="mr-[5px] w-px bg-[#8a90a0]" />
    </div>
);

export default function App() {
    return (
        <div className="flex h-screen flex-col overflow-hidden bg-[#e6e6e6] font-['Open_Sans',sans-serif]">
            <TitleBar />
            <div className="shrink-0 bg-[#f3f2f1]">
                <TabRow />
                <Ribbon />
            </div>
            <FormulaBar />
            <div className="flex shrink-0">
                <Sheet />
                <VerticalScroll />
            </div>
            <SheetTabs />
            <StatusBar />
            <Taskbar />
        </div>
    );
}
